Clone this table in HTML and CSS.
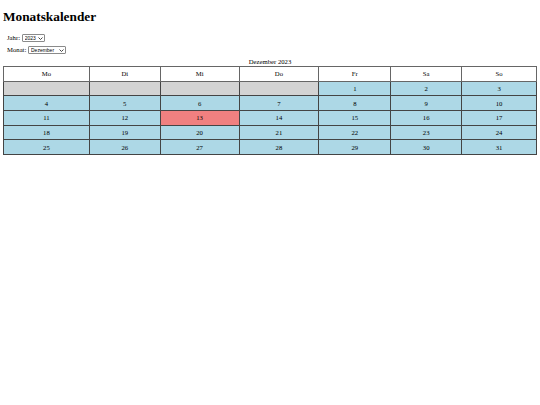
FILE: index.html
```html
<!DOCTYPE html>
<html lang="de">
<head>
<meta charset="utf-8">
<title>Monatskalender</title>
<link rel="stylesheet" href="styles.css">
</head>
<body>
<h1 class="title">Monatskalender</h1>
<div class="field">
  <label for="jahr">Jahr:</label>
  <span class="selwrap">
    <select id="jahr" class="sel sel-year"><option>2023</option></select>
    <svg class="arrow" width="5" height="3" viewBox="0 0 5 3"><path d="M0.5 0.5 L2.5 2.5 L4.5 0.5" fill="none" stroke="#333" stroke-width="0.9"/></svg>
  </span>
</div>
<div class="field">
  <label for="monat">Monat:</label>
  <span class="selwrap">
    <select id="monat" class="sel sel-month"><option>Dezember</option></select>
    <svg class="arrow" width="5" height="3" viewBox="0 0 5 3"><path d="M0.5 0.5 L2.5 2.5 L4.5 0.5" fill="none" stroke="#333" stroke-width="0.9"/></svg>
  </span>
</div>
<table class="cal">
  <caption class="cap">Dezember 2023</caption>
  <colgroup>
    <col class="c-mo"><col class="c-di"><col class="c-mi"><col class="c-do"><col class="c-fr"><col class="c-sa"><col class="c-so">
  </colgroup>
  <thead>
    <tr class="head"><th>Mo</th><th>Di</th><th>Mi</th><th>Do</th><th>Fr</th><th>Sa</th><th>So</th></tr>
  </thead>
  <tbody>
    <tr><td class="empty"></td><td class="empty"></td><td class="empty"></td><td class="empty"></td><td class="day">1</td><td class="day">2</td><td class="day">3</td></tr>
    <tr><td class="day">4</td><td class="day">5</td><td class="day">6</td><td class="day">7</td><td class="day">8</td><td class="day">9</td><td class="day">10</td></tr>
    <tr><td class="day">11</td><td class="day">12</td><td class="day today">13</td><td class="day">14</td><td class="day">15</td><td class="day">16</td><td class="day">17</td></tr>
    <tr><td class="day">18</td><td class="day">19</td><td class="day">20</td><td class="day">21</td><td class="day">22</td><td class="day">23</td><td class="day">24</td></tr>
    <tr><td class="day">25</td><td class="day">26</td><td class="day">27</td><td class="day">28</td><td class="day">29</td><td class="day">30</td><td class="day">31</td></tr>
  </tbody>
</table>
</body>
</html>
```
FILE: styles.css
```css
html, body {
  background: #fff;
}
body {
  margin: 3px;
  font-family: "Liberation Serif", "Times New Roman", serif;
  font-size: 6.7px;
  color: #000;
}
.title {
  font-size: 13.3px;
  font-weight: bold;
  margin: 6px 0 10px;
  line-height: 15px;
}
.field {
  margin: 0 0 4px 4px;
  line-height: 8px;
  height: 8px;
}
.selwrap {
  position: relative;
  display: inline-block;
  vertical-align: middle;
  height: 8px;
}
.sel {
  -webkit-appearance: none;
  appearance: none;
  font-family: "Liberation Sans", Arial, sans-serif;
  font-size: 5px;
  height: 8px;
  line-height: 6px;
  padding: 0 7px 0 2px;
  margin: 0;
  border: 1px solid #8a8a8a;
  border-radius: 1px;
  background: #fff;
  color: #000;
  display: block;
}
.sel-year { width: 23px; }
.sel-month { width: 38px; }
.arrow {
  position: absolute;
  right: 2px;
  top: 3px;
  pointer-events: none;
}
.cal {
  width: 534px;
  border-collapse: collapse;
}
.cap {
  line-height: 8px;
  height: 8px;
}
.cal th, .cal td {
  border: 1px solid #444;
  height: 13.7px;
  padding: 0;
  text-align: center;
  font-weight: normal;
}
.head th {
  background: #fff;
  border-color: #666;
}
.empty { background: #d3d3d3; }
.day { background: #add8e6; }
.today { background: #f08080; }
.c-mo { width: 86px; }
.c-di { width: 71px; }
.c-mi { width: 79px; }
.c-do { width: 80px; }
.c-fr { width: 72px; }
.c-sa { width: 71px; }
.c-so { width: 75px; }
```
